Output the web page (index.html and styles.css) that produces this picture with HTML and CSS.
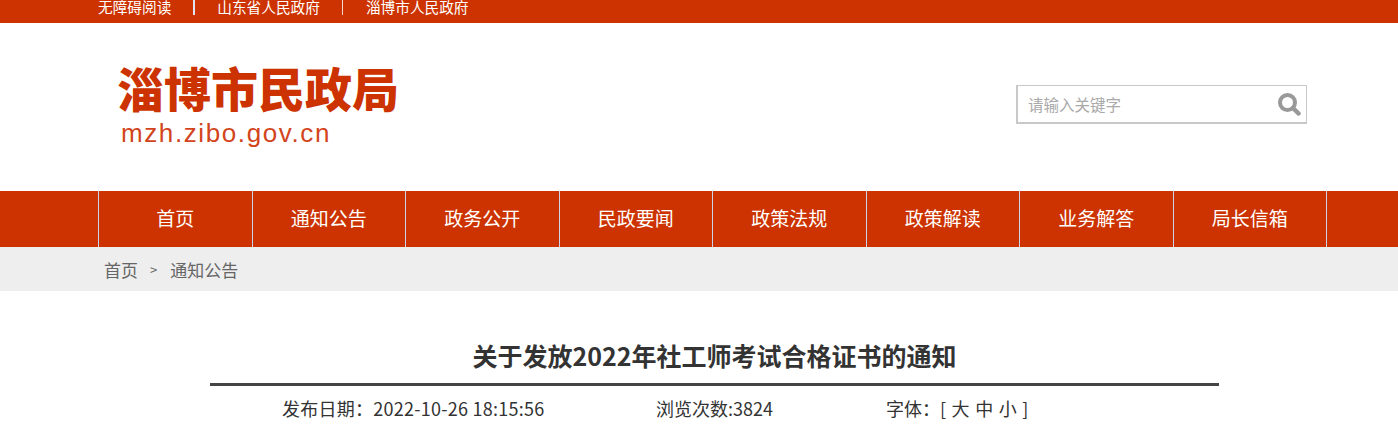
FILE: index.html
```html
<!DOCTYPE html>
<html lang="zh-CN">
<head>
  <meta charset="UTF-8" />
  <title>关于发放2022年社工师考试合格证书的通知</title>
  <link rel="stylesheet" href="styles.css">
</head>
<body>
  <div class="topbar">
    <a href="#" class="top-link">无障碍阅读</a>
    <a href="#" class="top-link">山东省人民政府</a>
    <a href="#" class="top-link">淄博市人民政府</a>
  </div>

  <div class="header">
    <div class="logo">
      <div class="logo-name">淄博市民政局</div>
      <div class="logo-url">mzh.zibo.gov.cn</div>
    </div>
    <form class="search">
      <span class="search-text">请输入关键字</span>
      <svg class="search-icon" width="24" height="24" viewBox="0 0 24 24">
        <circle cx="10.5" cy="10.5" r="7.5" fill="none" stroke="#999" stroke-width="4" />
        <path d="M16 16l5.5 5.5" stroke="#999" stroke-width="4.5" stroke-linecap="round" />
      </svg>
    </form>
  </div>

  <div class="nav">
    <ul class="nav-list">
      <li><a href="#">首页</a></li>
      <li><a href="#">通知公告</a></li>
      <li><a href="#">政务公开</a></li>
      <li><a href="#">民政要闻</a></li>
      <li><a href="#">政策法规</a></li>
      <li><a href="#">政策解读</a></li>
      <li><a href="#">业务解答</a></li>
      <li><a href="#">局长信箱</a></li>
    </ul>
  </div>

  <div class="crumb">
    <a href="#">首页</a>
    <span class="crumb-sep">&gt;</span>
    <a href="#">通知公告</a>
  </div>

  <div class="article">
    <h1 class="title">关于发放2022年社工师考试合格证书的通知</h1>
    <div class="meta">
      <span class="meta-date">发布日期：2022-10-26 18:15:56</span>
      <span class="meta-views">浏览次数:3824</span>
      <span class="meta-font">字体：[ 大 中 小 ]</span>
    </div>
  </div>
</body>
</html>
```

FILE: styles.css
```css
* {
  box-sizing: border-box;
  margin: 0;
  padding: 0;
}

html,
body {
  height: 443px;
  overflow: hidden;
}

body {
  background: #fff;
  font-family: "Noto Sans CJK SC", "Noto Sans", sans-serif;
  color: #333;
}

a {
  color: inherit;
  text-decoration: none;
}

.topbar {
  display: flex;
  align-items: flex-start;
  height: 23px;
  padding-left: 98px;
  background: #cc3300;
  overflow: hidden;
}

.top-link {
  height: 15px;
  padding-right: 22px;
  border-right: 1px solid #f4d6cc;
  margin-right: 23px;
  color: #fff;
  font-size: 14.67px;
  line-height: 13px;
  white-space: nowrap;
}

.top-link:first-child {
  margin-right: 22px;
  border-right: 2px solid #dfe3f2;
}

.top-link:last-child {
  border-right: 0;
}

.header {
  display: flex;
  align-items: flex-start;
  justify-content: space-between;
  height: 168px;
  padding: 35px 91px 0 117px;
}

.logo-name {
  color: #cc3300;
  font-size: 47px;
  font-weight: 900;
  line-height: 58px;
  white-space: nowrap;
}

.logo-url {
  margin-top: 2px;
  padding-left: 4px;
  color: #d2451c;
  font-family: "Liberation Sans", sans-serif;
  font-size: 26px;
  letter-spacing: 1.6px;
  line-height: 30px;
}

.search {
  display: flex;
  align-items: center;
  justify-content: space-between;
  width: 291px;
  height: 39px;
  margin-top: 27px;
  padding: 0 5px 1px 10px;
  border: 2px solid #c8c8c8;
  border-width: 1px 1px 2px 2px;
}

.search-text {
  color: #a9a9a9;
  font-size: 15.5px;
  line-height: 20px;
}

.nav {
  height: 56px;
  padding-left: 98px;
  background: #cc3300;
}

.nav-list {
  display: flex;
  width: 1229px;
  height: 56px;
  list-style: none;
  border-right: 1px solid #c9d3ea;
}

.nav-list li {
  flex: 1;
  border-left: 1px solid #c9d3ea;
  color: #fff;
  font-size: 19px;
  line-height: 54px;
  text-align: center;
}

.crumb {
  display: flex;
  align-items: center;
  height: 44px;
  padding-left: 104px;
  background: #eeeeee;
  color: #666;
  font-size: 17px;
}

.crumb-sep {
  margin: 0 13px 0 12px;
  font-size: 13px;
}

.article {
  width: 1009px;
  margin-left: 210px;
}

.title {
  height: 95px;
  padding-top: 46px;
  border-bottom: 3px solid #444;
  color: #333;
  font-size: 25px;
  font-weight: 700;
  line-height: 36px;
  text-align: center;
}

.meta {
  display: flex;
  height: 45px;
  padding-left: 72px;
  color: #333;
  font-size: 18px;
  line-height: 44px;
  white-space: nowrap;
}

.meta-date {
  width: 374px;
  letter-spacing: 0.25px;
}

.meta-views {
  width: 230px;
}

.meta-font {
  word-spacing: 1.5px;
}
```
